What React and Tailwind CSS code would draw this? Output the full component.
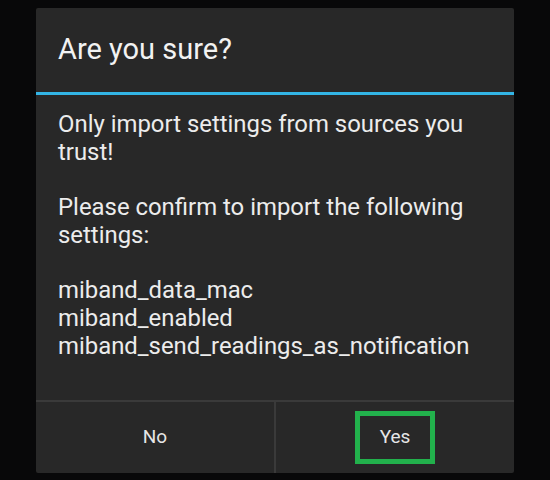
export default function App() {
  return (
    <div className="w-[550px] h-[480px] bg-[#080809] relative overflow-hidden" style={{ fontFamily: 'Roboto, "Noto Sans", sans-serif' }}>
      <div className="absolute left-[36px] top-[8px] w-[478px] h-[465px] bg-[#282828] rounded-[2px] flex flex-col">
        <div className="h-[84px] flex items-center pl-[22px] text-[29px] text-[#f2f2f2]">Are you sure?</div>
        <div className="h-[3px] bg-[#33b5e5]" />
        <div className="flex-1 pl-[22px] pt-[16px] text-[23.9px] leading-[27.7px] text-[#ececec]">
          <p>Only import settings from sources you<br />trust!</p>
          <p className="mt-[27.7px]">Please confirm to import the following<br />settings:</p>
          <p className="mt-[27.7px]">miband_data_mac<br />miband_enabled<br />miband_send_readings_as_notification</p>
        </div>
        <div className="h-[2px] bg-[#3a3a3a]" />
        <div className="h-[71px] flex text-[19px] text-[#e6e6e6]">
          <div className="flex-1 flex items-center justify-center">No</div>
          <div className="w-[2px] bg-[#3a3a3a]" />
          <div className="w-[238px] flex items-center justify-center">
            <div className="w-[80px] h-[53px] border-[5px] border-[#22b14c] flex items-center justify-center">Yes</div>
          </div>
        </div>
      </div>
    </div>
  );
}
